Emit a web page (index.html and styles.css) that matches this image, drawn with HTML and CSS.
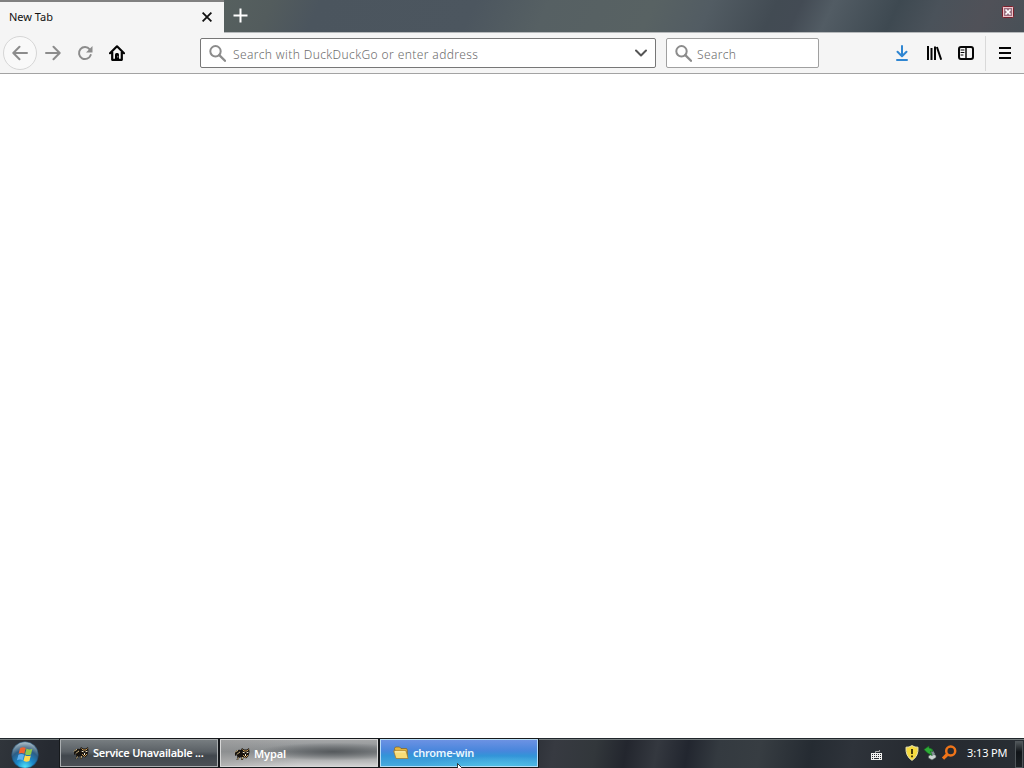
FILE: index.html
```html
<!DOCTYPE html>
<html lang="en">
<head>
    <meta charset="UTF-8">
    <title>New Tab</title>
    <link rel="stylesheet" href="styles.css">
</head>
<body>
    <header class="titlebar">
        <div class="tab">
            <span class="tab-title">New Tab</span>
            <svg class="tab-close" width="10" height="10" viewBox="0 0 10 10"><path d="M.6.6l8.8 8.8M9.4.6L.6 9.4"/></svg>
        </div>
        <div class="tabstrip">
            <svg class="new-tab" width="15" height="15" viewBox="0 0 15 15"><path d="M7.5.5v14M.5 7.500h14"/></svg>
            <svg class="window-close" width="12" height="12" viewBox="0 0 12 12">
                <rect x=".5" y=".5" width="11" height="11" rx="1" fill="#f0c4ca" stroke="#7b202d"/>
                <rect x="2" y="2" width="8" height="8" fill="#9a7080"/>
                <path d="M3.500 3.500l5 5M8.500 3.500l-5 5" stroke="#fff" stroke-width="1.700"/>
            </svg>
        </div>
    </header>

    <nav class="toolbar">
        <div class="button back">
            <svg class="icon muted" width="16" height="16" viewBox="0 0 16 16"><path d="M15 8H1.500M7.500 1.800L1.300 8l6.200 6.200"/></svg>
        </div>
        <div class="button">
            <svg class="icon muted" width="16" height="16" viewBox="0 0 16 16"><path d="M1 8h13.500M8.500 1.800L14.700 8l-6.200 6.200"/></svg>
        </div>
        <div class="button">
            <svg class="icon muted" width="16" height="16" viewBox="0 0 16 16">
                <path d="M12.700 4.300A6 6 0 1 0 13.700 10"/>
                <path d="M15.500 1v6.500H9z" fill="#8c8c8c" stroke="none"/>
            </svg>
        </div>
        <div class="button">
            <svg class="icon" width="16" height="16" viewBox="0 0 16 16">
                <path d="M1 8.200L8 1.300l7 6.900M3.200 7v7.800h9.600V7" stroke-width="2.200"/>
                <path d="M6 15V9.500A1.500 1.500 0 0 1 7.500 8h1A1.500 1.500 0 0 1 10 9.500V15z" fill="#000" stroke="none"/>
                <path d="M8.800 11.200v1" stroke="#999" stroke-width="1"/>
            </svg>
        </div>
        <div class="field urlbar">
            <svg class="icon muted" width="17" height="17" viewBox="0 0 17 17"><circle cx="6.500" cy="6.300" r="5.200"/><path d="M10.300 10.100l5.700 5.700" stroke-width="2.300"/></svg>
            <span class="placeholder">Search with DuckDuckGo or enter address</span>
            <svg class="icon chevron" width="12" height="8" viewBox="0 0 12 8"><path d="M1 1.500l5 5 5-5"/></svg>
        </div>
        <div class="field searchbar">
            <svg class="icon muted" width="17" height="17" viewBox="0 0 17 17"><circle cx="6.500" cy="6.300" r="5.200"/><path d="M10.300 10.100l5.700 5.700" stroke-width="2.300"/></svg>
            <span class="placeholder">Search</span>
        </div>
        <div class="actions">
            <div class="button">
                <svg class="icon download" width="16" height="16" viewBox="0 0 16 16"><path d="M8 1v10M3.500 6.700L8 11.200l4.500-4.500M3 15h10"/></svg>
            </div>
            <div class="button">
                <svg class="icon square" width="16" height="16" viewBox="0 0 16 16"><path d="M2 1v14M5.500 3v12M9 1.500V15M10.900 2l4.300 12.700"/></svg>
            </div>
            <div class="button">
                <svg class="icon" width="16" height="16" viewBox="0 0 16 16">
                    <rect x="1" y="2" width="14" height="12" rx="2"/>
                    <path d="M8 2v12" stroke-width="1.500"/>
                    <path d="M3 5h3M3 7.500h3M3 10h2" stroke-width="1"/>
                </svg>
            </div>
            <div class="button menu">
                <svg class="icon square" width="12" height="12" viewBox="0 0 12 12"><path d="M0 1h12M0 6h12M0 11h12"/></svg>
            </div>
        </div>
    </nav>

    <main class="page"></main>

    <footer class="taskbar">
        <div class="start">
            <svg width="28" height="28" viewBox="0 0 28 28">
                <defs>
                    <radialGradient id="orb" cx=".5" cy=".95" r=".95">
                        <stop offset="0" stop-color="#4fe3fa"/>
                        <stop offset=".35" stop-color="#1b86c8"/>
                        <stop offset=".65" stop-color="#2c5d85"/>
                        <stop offset=".8" stop-color="#66859b"/>
                        <stop offset="1" stop-color="#b5c7d1"/>
                    </radialGradient>
                </defs>
                <circle cx="14" cy="14" r="13.300" fill="url(#orb)" stroke="#1c4c70" stroke-width=".6"/>
                <path d="M9 7.200q3-1.800 5.700-.2l-1.400 5.700q-2.800-1.400-5.700 0z" fill="#ee6330"/>
                <path d="M15.500 7.600q2.700 1.600 5.900.2L20 13.400q-3 1.400-5.900-.2z" fill="#93c94a"/>
                <path d="M7.400 13.700q3-1.500 5.700 0l-1.400 5.500q-2.800-1.500-5.700.1z" fill="#5fb0ee"/>
                <path d="M13.900 14.200q2.900 1.600 5.900.2l-1.400 5.600q-3 1.400-5.900-.2z" fill="#ffd94e"/>
            </svg>
        </div>
        <div class="task">
            <svg class="task-icon" width="16" height="16" viewBox="0 0 16 16">
                <path d="M1 6q2-3 6-2l1-2 2 1.500h3L15 2l.5 4-1 4-2.500 2.500L9.500 11 9 14H7l.5-3L5 12l-1 2H2.500l1-3-1-2L1 10z" fill="#17130f"/>
                <path d="M1 6.500q1.500-2 3-2M3 8.500q1.500-2 3-2.500M3.500 13.500l1-2M8 13.500l.5-2.500" stroke="#d9c08a" fill="none"/>
                <path d="M8.500 3.500l1.500 1.500h3L14.500 3.500M9 9l2.500 2.500L14 9" stroke="#c99b55" fill="none"/>
                <path d="M8.700 6.300l2 .5M12.500 6.800l2-.5M11.500 8v2" stroke="#f2e6cc" stroke-width="1"/>
            </svg>
            <span class="task-name">Service Unavailable ...</span>
        </div>
        <div class="task active">
            <svg class="task-icon" width="16" height="16" viewBox="0 0 16 16">
                <path d="M1 6q2-3 6-2l1-2 2 1.500h3L15 2l.5 4-1 4-2.500 2.500L9.500 11 9 14H7l.5-3L5 12l-1 2H2.500l1-3-1-2L1 10z" fill="#17130f"/>
                <path d="M1 6.500q1.500-2 3-2M3 8.500q1.500-2 3-2.500M3.500 13.500l1-2M8 13.500l.5-2.500" stroke="#d9c08a" fill="none"/>
                <path d="M8.500 3.500l1.500 1.500h3L14.500 3.500M9 9l2.500 2.500L14 9" stroke="#c99b55" fill="none"/>
                <path d="M8.700 6.300l2 .5M12.500 6.800l2-.5M11.500 8v2" stroke="#f2e6cc" stroke-width="1"/>
            </svg>
            <span class="task-name">Mypal</span>
        </div>
        <div class="task folder">
            <svg class="task-icon" width="16" height="16" viewBox="0 0 16 16">
                <path d="M1.500 3.500l1-1.500h4l1.500 1.500h5.500l.8 1.500v7.500h-11z" fill="#e3b63e" stroke="#806022" stroke-width=".7"/>
                <path d="M.6 5.800h12.500l2 7.700H3z" fill="#f8dc77" stroke="#9d7428" stroke-width=".7"/>
                <path d="M2 6.800h10.300" stroke="#fff5b9"/>
            </svg>
            <span class="task-name">chrome-win</span>
            <svg class="cursor" width="8" height="12" viewBox="0 0 8 12"><path d="M.5.500v10l2.500-2.300L5 12l1.500-1-1.800-3.300h3z" fill="#fff" stroke="#111" stroke-width=".8"/></svg>
        </div>
        <div class="tray">
            <svg class="keyboard" width="11" height="10" viewBox="0 0 11 10">
                <path d="M4.500 3V1.500h4V0" stroke="#aaa" fill="none"/>
                <path d="M0 3h11v7H0z" fill="#f0f0f0"/>
                <path d="M1 4.500h9M1 6.500h9" stroke="#2b2e33" stroke-dasharray="1 1"/>
                <path d="M1 8.500h1M3 8.500h5M9 8.500h1" stroke="#2b2e33"/>
            </svg>
            <svg class="shield" width="14" height="16" viewBox="0 0 14 16">
                <path d="M7 .600q3 2 6 1.600.7 9-6 13.200Q.3 11.200 1 2.200q3 .4 6-1.600z" fill="#f6da3e" stroke="#e9e4b0"/>
                <path d="M7 4v5M7 10.500v1.800" stroke="#332a08" stroke-width="1.800"/>
            </svg>
            <svg class="device" width="14" height="16" viewBox="0 0 14 16">
                <path d="M5.500 11l4-2.500 3.500 2v2L9 15l-3.500-2z" fill="#cdd4d2" stroke="#4c5956" stroke-width=".6"/>
                <path d="M9.500 4.500l2.500 4.500-2.500 2-3-3.500z" fill="#7f8d92"/>
                <path d="M1 4.500L6 1v2q3.500 0 4 3.500L7.500 6 9 10.500 4.500 8z" fill="#2eab37" stroke="#16661e" stroke-width=".6"/>
            </svg>
            <svg class="finder" width="16" height="16" viewBox="0 0 16 16"><circle cx="9.700" cy="6" r="4.500"/><path d="M6.200 9.500L2 13.700" stroke-width="3.200"/></svg>
            <span class="clock">3:13 PM</span>
            <div class="show-desktop"></div>
        </div>
    </footer>
</body>
</html>
```
FILE: styles.css
```css
* {
    box-sizing: border-box;
}

body {
    margin: 0;
    height: 100vh;
    display: flex;
    flex-direction: column;
    overflow: hidden;
    background: #fff;
    font-family: "Noto Sans", "Open Sans", sans-serif;
}

svg {
    display: block;
    flex: none;
}

/* title bar */
.titlebar {
    display: flex;
    height: 33px;
    flex: none;
}

.tab {
    display: flex;
    align-items: center;
    justify-content: space-between;
    width: 224px;
    padding: 0 12px 2px 9px;
    border-top: 2px solid #808080;
    background: #f5f5f5;
}

.tab-title {
    font-size: 11px;
    color: #111;
}

.tab-close {
    fill: none;
    stroke: #111;
    stroke-width: 1.8;
}

.tabstrip {
    flex: 1;
    display: flex;
    justify-content: space-between;
    padding: 7px 10px 0 9px;
    border-bottom: 1px solid #b6b9bb;
    background: linear-gradient(115deg, #56605f 0%, #535c5d 6%, #4b555e 12%, #4c565f 31%, #566063 40%, #586263 53%, #525c63 60%, #424b53 68%, #434b54 71%, #525c64 75%, #3e4951 83%, #4a525a 88%, #505158 94%, #485057 100%);
}

.new-tab {
    margin-top: 1px;
    fill: none;
    stroke: #fff;
    stroke-width: 2;
}

.window-close {
    margin-top: -1px;
}

/* toolbar */
.toolbar {
    display: flex;
    align-items: center;
    height: 41px;
    flex: none;
    padding: 0 3px;
    border-bottom: 1px solid #a3a3a3;
    background: #f5f5f5;
}

.button {
    display: flex;
    align-items: center;
    justify-content: center;
    width: 32px;
    height: 34px;
}

.back {
    width: 34px;
    border: 1px solid #d6d6d6;
    border-radius: 50%;
    background: #f9f9f9;
}

.icon {
    fill: none;
    stroke: #050505;
    stroke-width: 2;
    stroke-linecap: round;
    stroke-linejoin: round;
}

.square {
    stroke-linecap: butt;
}

.muted {
    stroke: #8c8c8c;
}

.download {
    stroke: #2f86d2;
}

.field {
    display: flex;
    align-items: center;
    height: 30px;
    padding: 0 8px;
    border: 1px solid #a0a0a0;
    border-radius: 2px;
    background: #fff;
}

.urlbar {
    width: 456px;
    margin-left: 67px;
    border-color: #777;
}

.searchbar {
    width: 153px;
    margin-left: 10px;
}

.placeholder {
    margin: 2px 0 0 7px;
    font-size: 12px;
    font-weight: 300;
    letter-spacing: 0.39px;
    color: #6c6c6c;
    white-space: nowrap;
}

.searchbar .placeholder {
    margin-left: 5px;
}

.chevron {
    margin-left: auto;
    stroke: #555;
}

.actions {
    display: flex;
    align-items: center;
    margin-left: auto;
}

.menu {
    width: 36px;
    height: 35px;
    margin-left: 3px;
    border-left: 1px solid #d9d9d9;
    padding-left: 3px;
}

.page {
    flex: 1;
}

/* taskbar */
.taskbar {
    display: flex;
    gap: 2px;
    height: 30px;
    flex: none;
    border-top: 1px solid #20262b;
    background: linear-gradient(100deg, #30353b 0%, #262a31 5%, #292d34 51%, #373a41 54%, #32373b 58%, #23262e 61%, #34383f 64%, #22262f 67%, #343a40 70%, #373d42 74%, #252b32 79%, #2e333a 83%, #25292f 90%, #292e34 100%);
    box-shadow: inset 0 1px #737b7c;
}

.start {
    width: 58px;
    padding: 2px 0 0 11px;
}

.task {
    position: relative;
    display: flex;
    align-items: center;
    width: 158px;
    height: 28px;
    padding: 0 0 1px 12px;
    border: 1px solid #aaaeb0;
    background: linear-gradient(#777d80, #5a6065 45%, #41474d 60%, #4b5055);
    outline: 1px solid #16191c;
}

.task-name {
    margin-left: 4px;
    font-size: 11px;
    font-weight: 600;
    letter-spacing: -0.26px;
    color: #fff;
    white-space: nowrap;
}

.active {
    padding: 1px 0 0 13px;
    border-color: #d7d7d7;
    background:
        radial-gradient(ellipse 75px 9px at 72% 45%, #565a5d, transparent),
        linear-gradient(90deg, rgba(150, 150, 150, 0.5), transparent 50%),
        linear-gradient(#a5a7a8, #85898c 45%, #a1a3a4 65%, #d1d1d1);
}

.active .task-name {
    letter-spacing: -0.15px;
}

.folder {
    border-color: #b6dcf6;
    background:
        radial-gradient(ellipse 80px 10px at 75% 100%, rgba(85, 200, 233, 0.7), transparent),
        linear-gradient(#6c92e3, #4886dc 42%, #3394d8 60%, #46aadd);
}

.folder .task-name {
    color: #e9f7ff;
}

/* the pointer lies over the button and runs off the screen */
.cursor {
    position: absolute;
    left: 76px;
    top: 23px;
}

.tray {
    display: flex;
    align-items: center;
    margin-left: auto;
    padding-right: 1px;
}

.keyboard {
    margin-top: 2px;
}

.shield {
    margin-left: 23px;
    margin-top: -1px;
}

.device {
    margin: -2px 0 0 4px;
}

.finder {
    margin: -1px 0 0 4px;
    fill: none;
    stroke: #ef7419;
    stroke-width: 2.5;
}

.clock {
    width: 42px;
    margin: -2px 0 0 10px;
    font-size: 11px;
    letter-spacing: -0.12px;
    color: #fff;
    white-space: nowrap;
}

.show-desktop {
    width: 8px;
    height: 27px;
    margin: 1px 0 0 6px;
    border: 1px solid #50565a;
    background: linear-gradient(#50565a, #101418 40%, #1b2024);
}
```
